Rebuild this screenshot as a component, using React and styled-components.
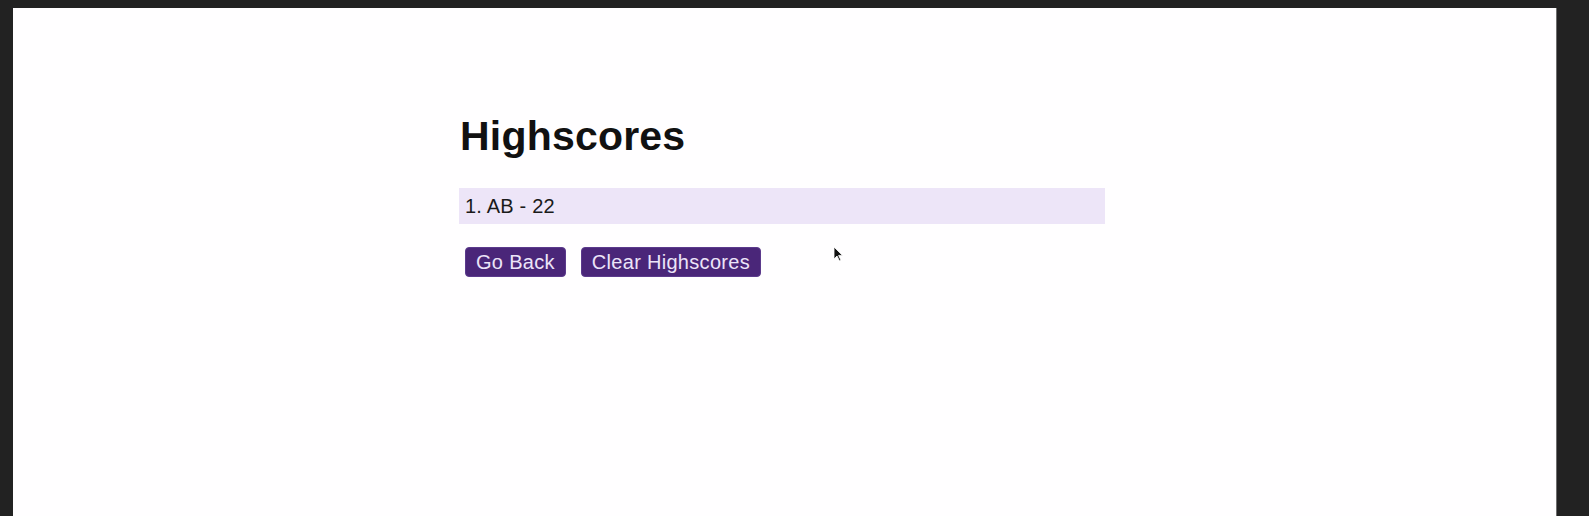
import React from 'react';
import styled, { createGlobalStyle } from 'styled-components';

const GlobalStyle = createGlobalStyle`
  html, body {
    margin: 0;
    height: 100%;
  }
  body {
    background: #222222;
    font-family: "Liberation Sans", Arial, sans-serif;
  }
  #root {
    height: 100%;
  }
`;

const Frame = styled.div`
  box-sizing: border-box;
  height: 100%;
  padding: 8px 32px 0 13px;
`;

const Panel = styled.main`
  position: relative;
  box-sizing: border-box;
  height: 100%;
  background: #fffeff;
  border-right: 1px solid #6e6e6e;
  padding: 105px 0 0 446px;
`;

const Scores = styled.section`
  width: 646px;
`;

const Title = styled.h1`
  margin: 0 0 28px 1px;
  font-size: 41px;
  line-height: 47px;
  font-weight: 700;
  letter-spacing: 0.2px;
  color: #111;
`;

const List = styled.ol`
  list-style: none;
  margin: 0 0 23px;
  padding: 0;
`;

const Entry = styled.li`
  height: 36px;
  line-height: 36px;
  padding: 0 6px;
  background: #ede5f8;
  font-size: 20px;
  letter-spacing: 0.2px;
  color: #1a1a1a;
`;

const Actions = styled.div`
  display: flex;
  gap: 15px;
  padding-left: 6px;
`;

const Button = styled.button`
  height: 30px;
  padding: 0 10px;
  border: 1px solid #5b3a8c;
  border-radius: 4px;
  background: #4a2679;
  color: #ece4f8;
  font-family: inherit;
  font-size: 20px;
  line-height: 28px;
  letter-spacing: 0.3px;
  cursor: pointer;
`;

const Pointer = styled.svg`
  position: absolute;
  left: 820px;
  top: 238px;
`;

export default function App() {
  const scores = [{ initials: 'AB', score: 22 }];

  return (
    <>
      <GlobalStyle />
      <Frame>
        <Panel>
          <Scores>
            <Title>Highscores</Title>
            <List>
              {scores.map((s, i) => (
                <Entry key={s.initials + i}>
                  {i + 1}. {s.initials} - {s.score}
                </Entry>
              ))}
            </List>
            <Actions>
              <Button>Go Back</Button>
              <Button>Clear Highscores</Button>
            </Actions>
          </Scores>
          <Pointer width="10" height="16" viewBox="0 0 10 16">
            <path d="M1 1 L1 13 L4 10 L6.5 15 L8 14.3 L5.6 9.4 L9.5 9.4 Z" fill="#111" stroke="#fff" strokeWidth="0.8" />
          </Pointer>
        </Panel>
      </Frame>
    </>
  );
}
